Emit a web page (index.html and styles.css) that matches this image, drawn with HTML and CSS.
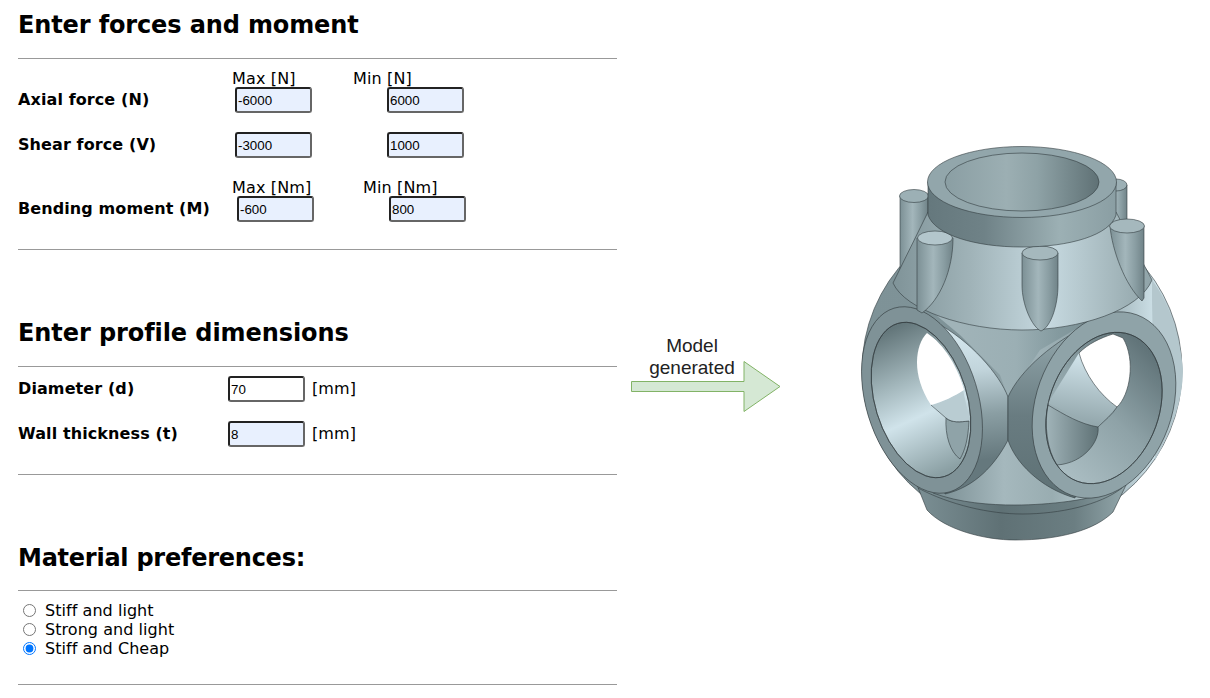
FILE: index.html
```html
<!DOCTYPE html>
<html lang="en">
<head>
  <meta charset="UTF-8" />
  <meta name="viewport" content="width=device-width, initial-scale=1" />
  <title>Node generator</title>
  <link rel="stylesheet" href="styles.css">
</head>
<body>

<main class="inputs">
  <h2>Enter forces and moment</h2>
  <hr>
  <div class="units">
    <span class="max">Max [N]</span>
    <span>Min [N]</span>
  </div>
  <div class="row">
    <label>Axial force (N)</label>
    <input class="filled" type="text" value="-6000">
    <input class="filled second" type="text" value="6000">
  </div>
  <div class="row gap">
    <label>Shear force (V)</label>
    <input class="filled" type="text" value="-3000">
    <input class="filled second" type="text" value="1000">
  </div>
  <div class="units gap-units">
    <span class="max wide">Max [Nm]</span>
    <span>Min [Nm]</span>
  </div>
  <div class="row">
    <label class="long">Bending moment (M)</label>
    <input class="filled" type="text" value="-600">
    <input class="filled second" type="text" value="800">
  </div>
  <hr class="end">

  <h2 class="next">Enter profile dimensions</h2>
  <hr>
  <div class="row first">
    <label class="short">Diameter (d)</label>
    <input type="text" value="70">
    <span class="unit">[mm]</span>
  </div>
  <div class="row gap">
    <label class="short">Wall thickness (t)</label>
    <input class="filled" type="text" value="8">
    <span class="unit">[mm]</span>
  </div>
  <hr class="end">

  <h2 class="last">Material preferences:</h2>
  <hr class="tight">
  <div class="radios">
    <label><input type="radio" name="material">Stiff and light</label>
    <label><input type="radio" name="material">Strong and light</label>
    <label><input type="radio" name="material" checked>Stiff and Cheap</label>
  </div>
  <hr class="closing">
</main>

<figure class="arrow">
  <figcaption>Model<br>generated</figcaption>
  <svg width="150" height="52" viewBox="631 360 150 52">
    <path d="M631.5 381.5H744V361.5L780 386.5L744 411.5V391.5H631.5Z" fill="#d5e8d4" stroke="#82b366"/>
  </svg>
</figure>

<svg class="model" width="345" height="410" viewBox="850 140 345 410">
  <defs>
    <linearGradient id="flange" gradientUnits="userSpaceOnUse" x1="917" y1="0" x2="1127" y2="0">
      <stop offset="0" stop-color="#7b8f94"/><stop offset=".4" stop-color="#5f7175"/><stop offset=".75" stop-color="#6b7e82"/><stop offset="1" stop-color="#94a8ac"/>
    </linearGradient>
    <linearGradient id="sphere" gradientUnits="userSpaceOnUse" x1="862" y1="0" x2="1183" y2="0">
      <stop offset="0" stop-color="#7e9297"/><stop offset=".35" stop-color="#7f9398"/><stop offset=".55" stop-color="#9fb2b7"/><stop offset=".72" stop-color="#8da1a6"/><stop offset=".92" stop-color="#d0e3ea"/><stop offset="1" stop-color="#a9bcc2"/>
    </linearGradient>
    <linearGradient id="belly" gradientUnits="userSpaceOnUse" x1="940" y1="0" x2="1100" y2="0">
      <stop offset="0" stop-color="#7c9095"/><stop offset=".4" stop-color="#a5b8bd"/><stop offset=".7" stop-color="#99adb1"/><stop offset="1" stop-color="#b7cad0"/>
    </linearGradient>
    <linearGradient id="cone" gradientUnits="userSpaceOnUse" x1="893" y1="0" x2="1152" y2="0">
      <stop offset="0" stop-color="#7f9398"/><stop offset=".3" stop-color="#a0b3b8"/><stop offset=".6" stop-color="#c6d9e0"/><stop offset=".85" stop-color="#a5b8bd"/><stop offset="1" stop-color="#8fa3a8"/>
    </linearGradient>
    <linearGradient id="waist" gradientUnits="userSpaceOnUse" x1="960" y1="0" x2="1100" y2="0">
      <stop offset="0" stop-color="#a0b3b8"/><stop offset=".4" stop-color="#9bafb4"/><stop offset=".7" stop-color="#849a9f"/><stop offset="1" stop-color="#7a8e93"/>
    </linearGradient>
    <linearGradient id="ringSide" gradientUnits="userSpaceOnUse" x1="928" y1="0" x2="1116" y2="0">
      <stop offset="0" stop-color="#65787d"/><stop offset=".3" stop-color="#6f8287"/><stop offset=".7" stop-color="#9cb0b4"/><stop offset="1" stop-color="#8a9ea3"/>
    </linearGradient>
    <linearGradient id="bore" gradientUnits="userSpaceOnUse" x1="945" y1="0" x2="1099" y2="0">
      <stop offset="0" stop-color="#8a9ea3"/><stop offset=".4" stop-color="#9cafb3"/><stop offset=".6" stop-color="#8ea2a6"/><stop offset="1" stop-color="#5f7175"/>
    </linearGradient>
    <linearGradient id="pin" x1="0" y1="0" x2="1" y2="0">
      <stop offset="0" stop-color="#7c9095"/><stop offset=".45" stop-color="#a3b6bb"/><stop offset=".75" stop-color="#899da2"/><stop offset="1" stop-color="#708388"/>
    </linearGradient>
    <linearGradient id="leftCollar" gradientUnits="userSpaceOnUse" x1="970" y1="340" x2="985" y2="490">
      <stop offset="0" stop-color="#d0e3ea"/><stop offset=".2" stop-color="#c2d5dc"/><stop offset=".5" stop-color="#8a9ea3"/><stop offset=".8" stop-color="#65787d"/><stop offset="1" stop-color="#65787d"/>
    </linearGradient>
    <linearGradient id="rightCollar" gradientUnits="userSpaceOnUse" x1="1040" y1="340" x2="1040" y2="490">
      <stop offset="0" stop-color="#8ea2a7"/><stop offset=".5" stop-color="#697c81"/><stop offset="1" stop-color="#5f7276"/>
    </linearGradient>
    <linearGradient id="leftBore" gradientUnits="userSpaceOnUse" x1="905" y1="325" x2="925" y2="475">
      <stop offset="0" stop-color="#64777b"/><stop offset=".35" stop-color="#a3b7bc"/><stop offset=".6" stop-color="#d0e3ea"/><stop offset="1" stop-color="#8ba0a4"/>
    </linearGradient>
    <linearGradient id="rightBore" gradientUnits="userSpaceOnUse" x1="1150" y1="350" x2="1090" y2="480">
      <stop offset="0" stop-color="#617479"/><stop offset=".5" stop-color="#8ea2a7"/><stop offset="1" stop-color="#a9bcc1"/>
    </linearGradient>
    <linearGradient id="rightPocket" gradientUnits="userSpaceOnUse" x1="1045" y1="0" x2="1098" y2="0">
      <stop offset="0" stop-color="#a2b5ba"/><stop offset="1" stop-color="#5f7276"/>
    </linearGradient>
    <linearGradient id="rightLight" gradientUnits="userSpaceOnUse" x1="1075" y1="355" x2="1065" y2="425">
      <stop offset="0" stop-color="#d0e3ea"/><stop offset="1" stop-color="#8fa3a8"/>
    </linearGradient>
  </defs>

  <g stroke="#333d40" stroke-width=".6">
    <!-- sphere body -->
    <circle cx="1022" cy="370" r="160" fill="url(#sphere)"/>

    <!-- bottom flange -->
    <path d="M917 485L927 510C945 530 985 540 1015 540C1060 540 1095 530 1113 512L1126 485Z" fill="url(#flange)"/>
    <path d="M918 488C950 505 990 514 1022 514C1060 514 1100 505 1122 488" fill="none"/>
    <path d="M933 493C960 503 990 505 1015 505C1050 505 1090 500 1113 491L1030 430L1008 430Z" fill="url(#belly)" stroke="none"/>
    <path d="M933 493C960 503 990 505 1015 505C1050 505 1090 500 1113 491" fill="none"/>
    <path d="M930 310L1100 315L1040 350L1008 397L1000 375L960 335Z" fill="url(#waist)" stroke="none"/>

    <!-- right side shell -->
    <path d="M1152 280C1168 300 1180 335 1183 370C1183 400 1172 430 1155 460L1152 300Z" fill="#b4c7cd" stroke="none"/>

    <!-- collars -->
    <path d="M935 322C970 340 1000 375 1008 397V440C995 465 975 487 945 494L930 400Z" fill="url(#leftCollar)"/>
    <path d="M1093 323C1055 340 1020 370 1008 397V440C1015 462 1040 488 1075 498L1100 400Z" fill="url(#rightCollar)"/>

    <!-- left ring -->
    <ellipse cx="922" cy="400" rx="56" ry="96" transform="rotate(-17 922 400)" fill="#7f9297"/>
    <ellipse cx="921" cy="400" rx="46" ry="80" transform="rotate(-17 921 400)" fill="url(#leftBore)"/>
    <path d="M946 418C952 423 960 422 969 421C968 440 965 450 960 459C950 452 945 435 946 418Z" fill="#8fa3a8"/>
    <path d="M932 405C942 402 955 396 963 390L970 421C960 422 952 423 946 418Z" fill="#b9ccd2" stroke="none"/>
    <path d="M927 333C915 345 911 375 931 405C942 402 955 396 964 390C958 368 945 345 927 333Z" fill="#fff" stroke="none"/>
    <path d="M931 405L946 418C952 423 960 422 969 421" fill="none"/>
    <ellipse cx="921" cy="400" rx="46" ry="80" transform="rotate(-17 921 400)" fill="none"/>

    <!-- right ring -->
    <ellipse cx="1104" cy="405" rx="68" ry="96" transform="rotate(20 1104 405)" fill="#8fa3a8"/>
    <ellipse cx="1104" cy="408" rx="55" ry="78" transform="rotate(20 1104 408)" fill="url(#rightBore)"/>
    <path d="M1048 403L1079 353L1117 407L1098 427Z" fill="url(#rightLight)" stroke="none"/>
    <path d="M1048 405C1065 415 1080 424 1098 427C1100 440 1085 463 1057 465C1047 450 1044 425 1048 405Z" fill="url(#rightPocket)"/>
    <path d="M1113 334C1100 338 1088 344 1079 353C1085 375 1100 395 1117 407C1130 395 1136 360 1123 338Z" fill="#fff"/>
    <path d="M1098 427C1105 420 1112 415 1117 407" fill="none"/>
    <ellipse cx="1104" cy="408" rx="55" ry="78" transform="rotate(20 1104 408)" fill="none"/>

    <!-- back pins -->
    <path d="M1105 185H1127V225H1105Z" fill="url(#pin)"/>
    <ellipse cx="1116" cy="185" rx="11" ry="6" fill="#9cb0b5"/>
    <path d="M900 196V270L928 225V196Z" fill="url(#pin)"/>
    <ellipse cx="914" cy="196" rx="14.5" ry="6.5" fill="#9cb0b5"/>

    <!-- upper cone -->
    <path d="M928 212L893 283C905 310 965 330 1022 330C1080 330 1140 310 1152 280L1116 212Z" fill="url(#cone)"/>

    <!-- front pins -->
    <path d="M917 238V310L922 313C940 300 953 270 953 238Z" fill="url(#pin)"/>
    <ellipse cx="935" cy="238" rx="17.5" ry="7" fill="#b3c6cc"/>
    <path d="M1022 253V285C1022 305 1032 327 1041 331C1051 327 1058 305 1058 285V253Z" fill="url(#pin)"/>
    <ellipse cx="1040" cy="253" rx="18" ry="7" fill="#a5b8bd"/>
    <path d="M1110 226C1112 250 1125 285 1142 301L1144 298V226Z" fill="url(#pin)"/>
    <ellipse cx="1127" cy="226" rx="17.5" ry="7" fill="#a5b8bd"/>

    <!-- top ring -->
    <path d="M928 182V215C935 235 975 247 1022 247C1070 247 1110 235 1116 215V182Z" fill="url(#ringSide)"/>
    <ellipse cx="1022" cy="182" rx="94.5" ry="35.5" fill="#92a6ab"/>
    <ellipse cx="1022" cy="182" rx="77" ry="29" fill="url(#bore)"/>
  </g>
</svg>

</body>
</html>
```

FILE: styles.css
```css
body {
  margin: 0;
  display: flex;
  align-items: flex-start;
  font-family: "DejaVu Sans", sans-serif;
  font-size: 16px;
  color: #000;
  background: #fff;
}
.inputs {
  width: 599px;
  margin-left: 18px;
  flex: none;
}
h2 {
  margin: 11px 0 0;
  font-size: 24px;
  line-height: 28px;
  letter-spacing: -0.13px;
}
h2.next {
  margin-top: 69px;
  letter-spacing: -0.08px;
}
h2.last {
  margin-top: 69px;
  letter-spacing: -0.25px;
}
hr {
  margin: 19px 0 0;
  border: none;
  border-top: 1px solid #999;
}
hr.tight {
  margin-top: 18px;
}
hr.end {
  margin-top: 27px;
}
hr.closing {
  margin-top: 26px;
}
.units {
  display: flex;
  padding-left: 214px;
  margin: 11px 0 -1px;
  line-height: 18px;
  letter-spacing: 0.15px;
}
.units.gap-units {
  margin-top: 21px;
}
.units .max {
  width: 121px;
}
.units .max.wide {
  width: 131px;
}
.row {
  display: flex;
  align-items: center;
  height: 26px;
}
.row.gap {
  margin-top: 19px;
}
.row.first {
  margin-top: 9px;
}
.row label {
  width: 217px;
  margin-top: -2px;
  font-weight: bold;
  letter-spacing: 0.1px;
}
.row label.long {
  width: 219px;
}
.row label.short {
  width: 210px;
}
.row input {
  width: 77px;
  height: 26px;
  box-sizing: border-box;
  margin: 0;
  padding: 1px;
  font-family: "Liberation Sans", Arial, sans-serif;
  font-size: 13.33px;
  background: #fff;
  border: 2px solid;
  border-color: #222 #666 #666 #222;
  border-radius: 3px;
}
.row input.filled {
  background: #e8f0fe;
}
.row input.second {
  margin-left: 75px;
}
.unit {
  margin: -2px 0 0 7px;
  letter-spacing: 0.1px;
}
.radios {
  margin-top: 10px;
  letter-spacing: 0.05px;
}
.radios label {
  display: flex;
  align-items: center;
  height: 19px;
}
.radios input {
  width: 13px;
  height: 13px;
  margin: 0 9px 0 5px;
}
.arrow {
  flex: none;
  width: 150px;
  margin: 335px 0 0 14px;
}
.arrow figcaption {
  width: 122px;
  text-align: center;
  font-family: "Liberation Sans", Arial, sans-serif;
  font-size: 19px;
  line-height: 22px;
  color: #222;
}
.arrow svg {
  display: block;
  margin-top: -19px;
}
.model {
  flex: none;
  margin: 140px 0 0 69px;
}
```
